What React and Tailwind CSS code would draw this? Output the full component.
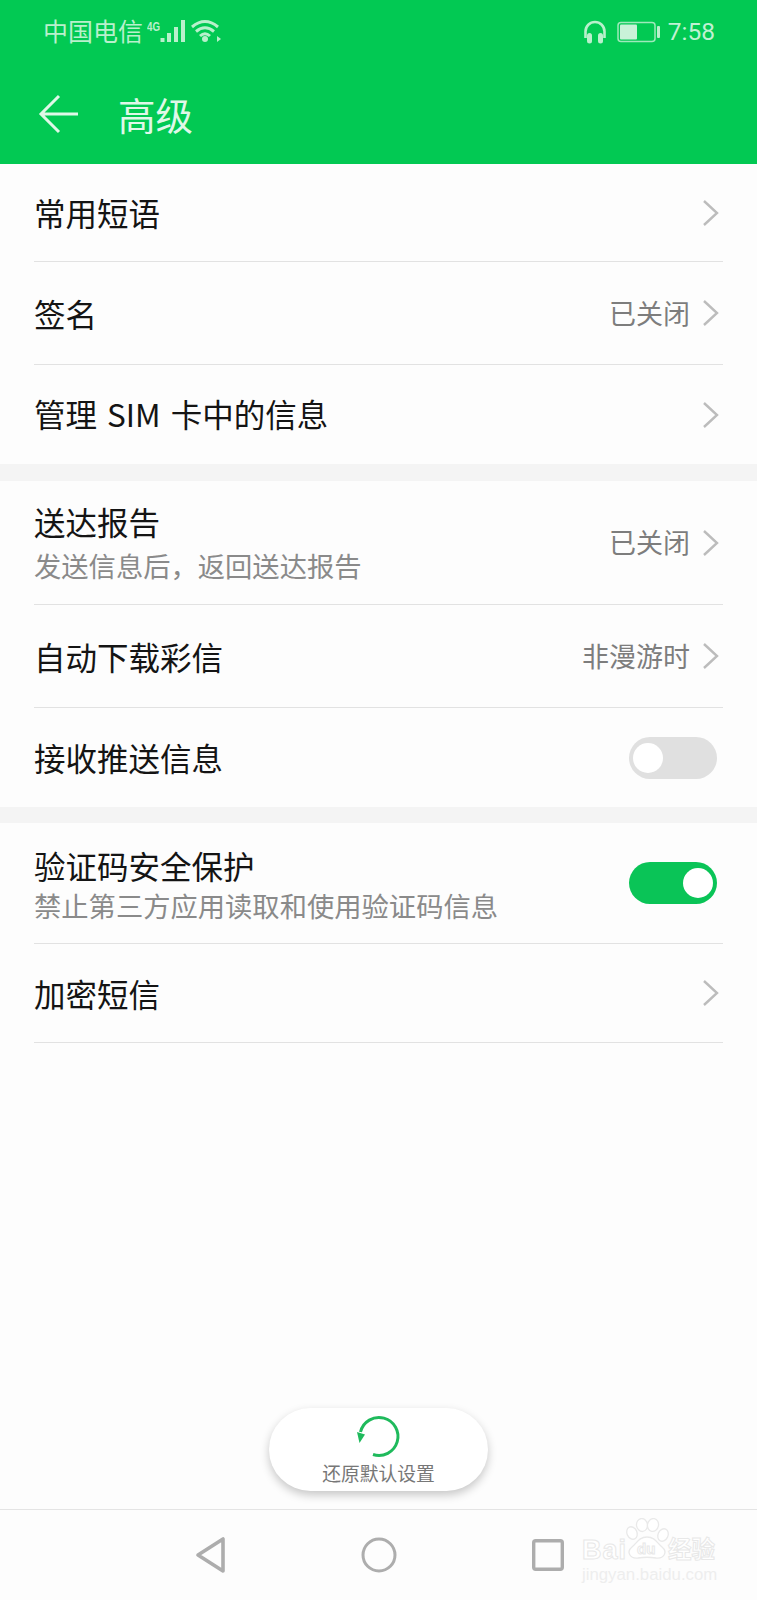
import React from "react";

const FONT = "[font-family:'Noto_Sans_CJK_SC','Noto_Sans',sans-serif]";

function Chevron() {
  return (
    <svg width="17" height="28" viewBox="0 0 17 28" className="ml-[12px] shrink-0">
      <path d="M2 2 L15 14 L2 26" fill="none" stroke="#bcbcbc" strokeWidth="2.4" />
    </svg>
  );
}

function Toggle({ on }) {
  return (
    <div
      className={`mr-[2px] flex h-[42px] w-[88px] items-center rounded-full px-[4px] ${
        on ? "justify-end bg-[#0ac457]" : "justify-start bg-[#e0e0e0]"
      }`}
    >
      <div className="h-[30px] w-[30px] rounded-full bg-white" />
    </div>
  );
}

function Row({ title, sub, value, chevron, toggle, height, divider = true, nudge = "", subGap = "mt-[2px]" }) {
  return (
    <div className={`mx-[34px] flex items-center pr-[4px] ${divider ? "border-b border-[#e2e2e2]" : ""}`} style={{ height }}>
      <div className={`flex min-w-0 flex-1 flex-col ${nudge}`}>
        <div className="text-[31.5px] leading-[40px] text-[#141414] whitespace-nowrap [word-spacing:3px]">{title}</div>
        {sub && <div className={`${subGap} text-[27.3px] leading-[36px] text-[#8a8a8a] whitespace-nowrap`}>{sub}</div>}
      </div>
      {value && <div className={`text-[27px] leading-[36px] text-[#7d7d7d] whitespace-nowrap ${nudge}`}>{value}</div>}
      {chevron && <Chevron />}
      {toggle !== undefined && <Toggle on={toggle} />}
    </div>
  );
}

function Signal() {
  return (
    <svg width="78" height="30" viewBox="0 0 78 30" className="ml-[4px] shrink-0">
      <text x="0" y="14" fontSize="13" fontWeight="700" fill="#b9f0cc" fontFamily="'Liberation Sans',sans-serif" textLength="13" lengthAdjust="spacingAndGlyphs">4G</text>
      <g fill="#b9f0cc">
        <rect x="13.5" y="21" width="4" height="4" />
        <rect x="20" y="16" width="4" height="9" />
        <rect x="27" y="10" width="4" height="15" />
        <rect x="34" y="3" width="4" height="22" />
        <circle cx="58" cy="22" r="3" />
        <path d="M70 19 L74 22 L70 25 Z" />
      </g>
      <g fill="none" stroke="#b9f0cc" strokeWidth="3">
        <path d="M45 10 Q58 -1 71 10" />
        <path d="M49 14.5 Q58 7 67 14.5" />
        <path d="M53 19 Q58 14.5 63 19" />
      </g>
    </svg>
  );
}

function StatusRight() {
  return (
    <div className="flex items-center">
      <svg width="24" height="24" viewBox="0 0 24 24">
        <path d="M2.5 18 V11.5 A9.5 9.5 0 0 1 21.5 11.5 V18" fill="none" stroke="#b9f0cc" strokeWidth="2.6" />
        <rect x="4" y="13" width="5" height="10.5" rx="2.5" fill="#b9f0cc" />
        <rect x="15" y="13" width="5" height="10.5" rx="2.5" fill="#b9f0cc" />
      </svg>
      <svg width="44" height="22" viewBox="0 0 44 22" className="ml-[10px]">
        <rect x="1" y="1.5" width="37" height="19" rx="3" fill="none" stroke="#9fe9bb" strokeWidth="1.5" />
        <rect x="3" y="3.5" width="17" height="15" rx="1" fill="#c9f2d8" />
        <rect x="40" y="5" width="3" height="12" rx="1" fill="#b9f0cc" />
      </svg>
      <span className="ml-[7px] text-[24.5px] leading-[30px] text-[#c0f1d2] [font-family:'Roboto',sans-serif]">7:58</span>
    </div>
  );
}

function Watermark() {
  return (
    <div className="absolute left-[581px] top-[8px] h-[74px] w-[140px] select-none">
      <svg width="140" height="44" viewBox="0 0 140 44" className="absolute left-0 top-0">
        <g fill="#fff" stroke="#e9e9e9" strokeWidth="1.3">
          <ellipse cx="51" cy="15" rx="5" ry="6.5" transform="rotate(-25 51 15)" />
          <ellipse cx="61" cy="7" rx="5.5" ry="6.5" transform="rotate(-8 61 7)" />
          <ellipse cx="72" cy="7" rx="5.5" ry="6.5" transform="rotate(12 72 7)" />
          <ellipse cx="82" cy="17" rx="5" ry="6.5" transform="rotate(25 82 17)" />
          <path d="M66 19 C58 19 56 25 51 29 C45 34 49 41 57 40 C63 39 69 39 75 40 C83 41 87 34 81 29 C76 25 74 19 66 19 Z" />
        </g>
      </svg>
      <span className="absolute left-[1px] top-[17px] text-[27px] font-bold leading-[30px] tracking-[1px] text-white [font-family:'Liberation_Sans',sans-serif] [-webkit-text-stroke:1px_#e8e8e8]">Bai</span>
      <span className="absolute left-[56px] top-[21px] text-[15px] font-bold leading-[20px] text-white [font-family:'Liberation_Sans',sans-serif] [-webkit-text-stroke:1px_#e8e8e8]">du</span>
      <span className="absolute left-[87px] top-[15px] text-[23.5px] font-bold leading-[30px] text-white [-webkit-text-stroke:1px_#e8e8e8]">经验</span>
      <span className="absolute left-[1px] top-[47px] text-[16.8px] leading-[20px] text-[#eeeeee] [font-family:'Liberation_Sans',sans-serif]">jingyan.baidu.com</span>
    </div>
  );
}

export default function App() {
  return (
    <div className={`flex h-[1600px] w-[757px] flex-col overflow-hidden bg-[#fdfdfd] ${FONT}`}>
      <header className="h-[164px] shrink-0 bg-[#02c953]">
        <div className="flex h-[64px] items-center justify-between pl-[43px] pr-[42px]">
          <div className="flex items-center">
            <span className="pb-[4px] text-[25px] leading-[30px] text-[#b9f0cc]">中国电信</span>
            <Signal />
          </div>
          <StatusRight />
        </div>
        <div className="flex h-[100px] items-center pl-[38px]">
          <svg width="42" height="40" viewBox="0 0 42 40">
            <path d="M21 2 L3 20 L21 38 M3 20 H40" fill="none" stroke="#dff8e8" strokeWidth="3" />
          </svg>
          <span className="ml-[38px] text-[37.5px] leading-[44px] text-[#dff8e8]">高级</span>
        </div>
      </header>

      <Row title="常用短语" chevron height="98px" nudge="pb-[2px]" />
      <Row title="签名" value="已关闭" chevron height="103px" />
      <Row title="管理 SIM 卡中的信息" chevron height="99px" divider={false} nudge="pb-[4px]" />
      <div className="h-[17px] bg-[#f4f4f4]" />
      <Row title="送达报告" sub="发送信息后，返回送达报告" value="已关闭" chevron height="124px" subGap="mt-[6px]" nudge="pb-[1px]" />
      <Row title="自动下载彩信" value="非漫游时" chevron height="103px" />
      <Row title="接收推送信息" toggle={false} height="99px" divider={false} nudge="pb-[2px]" />
      <div className="h-[16px] bg-[#f4f4f4]" />
      <Row title="验证码安全保护" sub="禁止第三方应用读取和使用验证码信息" toggle={true} height="121px" nudge="pt-[1px]" />
      <Row title="加密短信" chevron height="99px" nudge="pb-[1px]" />

      <div className="flex flex-1 items-end justify-center pb-[18px]">
        <div className="flex h-[83px] w-[219px] flex-col items-center rounded-full bg-white pt-[5px] shadow-[0_4px_10px_rgba(0,0,0,0.22)]">
          <svg width="46" height="46" viewBox="0 0 46 46">
            <path d="M17 41.5 A19 19 0 1 0 4.5 19" fill="none" stroke="#1fba5c" strokeWidth="3" />
            <path d="M1 19 L9 21.5 L3.5 30 Z" fill="#1fba5c" />
          </svg>
          <span className="mt-[2px] text-[18.8px] leading-[24px] text-[#777] whitespace-nowrap">还原默认设置</span>
        </div>
      </div>

      <nav className="relative flex h-[91px] shrink-0 items-center border-t border-[#e4e4e4] pl-[195px]">
        <svg width="32" height="38" viewBox="0 0 32 38">
          <path d="M28 3 V35 L3 19 Z" fill="none" stroke="#adadad" strokeWidth="3.6" strokeLinejoin="round" />
        </svg>
        <svg width="36" height="36" viewBox="0 0 36 36" className="ml-[134px]">
          <circle cx="18" cy="18" r="16" fill="none" stroke="#adadad" strokeWidth="3" />
        </svg>
        <svg width="32" height="32" viewBox="0 0 32 32" className="ml-[135px]">
          <rect x="1.7" y="1.7" width="28.6" height="28.6" rx="2" fill="none" stroke="#adadad" strokeWidth="3.4" />
        </svg>
        <Watermark />
      </nav>
    </div>
  );
}
